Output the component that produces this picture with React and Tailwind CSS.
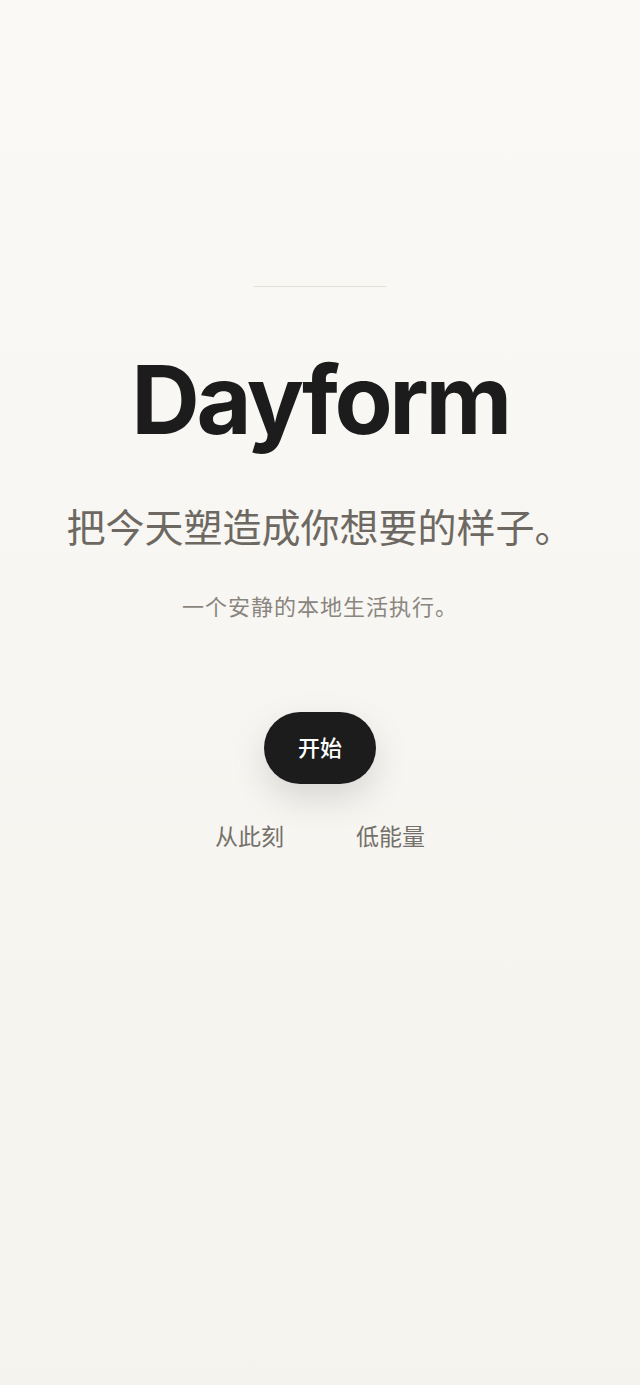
export default function App() {
  const cjk = { fontFamily: '"Inter", "Noto Sans CJK SC", sans-serif' };
  return (
    <div
      className="w-full min-h-[1385px] bg-gradient-to-b from-[#faf9f6] to-[#f4f3ee] flex flex-col items-center"
      style={cjk}
    >
      <div className="mt-[286px] h-px w-[132px] bg-[#e2dfd9]" />
      <h1
        className="mt-[65px] text-[95px] leading-none font-bold tracking-[-0.035em] text-[#1c1c1c]"
        style={{ fontFamily: '"Inter", sans-serif' }}
      >
        Dayform
      </h1>
      <p className="mt-[61px] text-[39px] leading-none text-[#6d6962]">
        把今天塑造成你想要的样子。
      </p>
      <p className="mt-[49px] text-[22px] leading-none tracking-[1px] text-[#8a867f]">
        一个安静的本地生活执行。
      </p>
      <button className="mt-[94px] w-[112px] h-[72px] rounded-full bg-[#1c1c1c] text-white text-[22px] font-medium shadow-[0_14px_36px_rgba(0,0,0,0.13)] flex items-center justify-center">
        开始
      </button>
      <div className="mt-[42px] flex items-center gap-[72px] text-[23px] leading-none text-[#75716a]">
        <span>从此刻</span>
        <span>低能量</span>
      </div>
    </div>
  );
}
